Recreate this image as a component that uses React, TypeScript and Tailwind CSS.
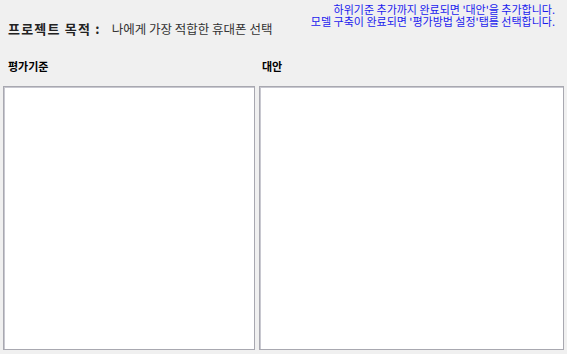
import React from 'react';

const App: React.FC = () => {
  return (
    <div
      className="w-[567px] h-[354px] bg-[#f0f0f0] flex flex-col text-black overflow-hidden"
      style={{ fontFamily: '"Noto Sans CJK KR", "Noto Sans", sans-serif' }}
    >
      {/* header */}
      <div className="relative h-[50px] shrink-0">
        <div className="absolute right-[12px] top-[3px] text-right text-[11px] leading-[12px] text-[#1a1aee]">
          <div>하위기준 추가까지 완료되면 '대안'을 추가합니다.</div>
          <div>모델 구축이 완료되면 '평가방법 설정'탭를 선택합니다.</div>
        </div>
        <div className="absolute left-[8px] top-[20px] flex items-center text-[13px] leading-[18px]">
          <span className="font-bold tracking-[1.2px] text-[#222]">프로젝트 목적 :</span>
          <span className="ml-[11px] text-[12.5px] text-[#333]">나에게 가장 적합한 휴대폰 선택</span>
        </div>
      </div>

      {/* labels */}
      <div className="flex h-[36px] shrink-0 text-[11px] font-bold leading-[16px]">
        <div className="w-[258px] pl-[8px] pt-[8px]">평가기준</div>
        <div className="flex-1 pl-[4px] pt-[8px]">대안</div>
      </div>

      {/* boxes */}
      <div className="flex pl-[3px] pr-[3px] h-[264px] gap-[4px]">
        <div className="w-[252px] h-full bg-white border border-[#a8a8b0] shadow-[inset_1px_1px_0_#c8c8d0]" />
        <div className="flex-1 h-full bg-white border border-[#a8a8b0] shadow-[inset_1px_1px_0_#c8c8d0]" />
      </div>
    </div>
  );
};

export default App;
